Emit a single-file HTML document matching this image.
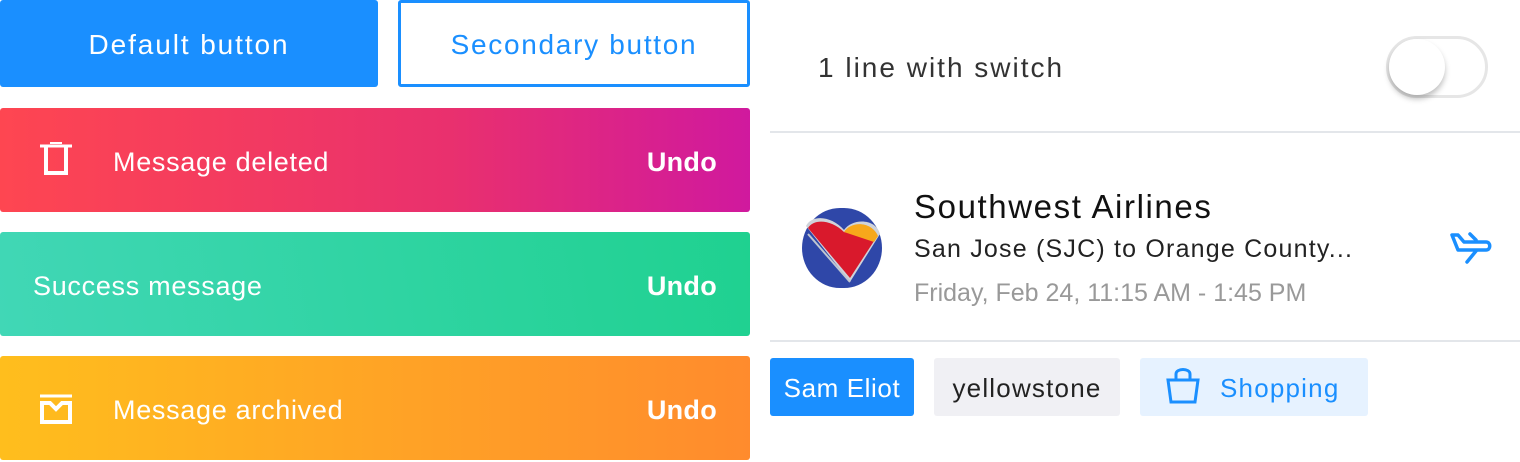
<!DOCTYPE html><html><head><style>
body{margin:0;width:1520px;height:460px;background:#fff;font-family:"Liberation Sans",sans-serif;position:relative;overflow:hidden}
.a{position:absolute}
.btn{position:absolute;top:0;height:87px;border-radius:3px;display:flex;align-items:center;justify-content:center;font-size:28px;letter-spacing:1.9px;padding-top:2px;box-sizing:border-box}
.bar{position:absolute;left:0;width:750px;height:104px;border-radius:3px;color:#fff;font-size:27px;letter-spacing:0.7px}
.bar .t{position:absolute;top:2px;line-height:104px}
.bar .u{position:absolute;right:33px;top:2px;line-height:104px;font-weight:bold;font-size:27px;letter-spacing:0.3px}
.tag{position:absolute;top:358px;height:58px;border-radius:3px;font-size:26px;line-height:60px}
</style></head><body>
<div class="btn" style="left:0;width:378px;background:#1a8fff;color:#fff">Default button</div>
<div class="btn" style="left:398px;width:352px;height:87px;border:3px solid #1a8fff;color:#1a8fff;letter-spacing:1.7px">Secondary button</div>

<div class="bar" style="top:108px;background:linear-gradient(90deg,#fe4651,#e9306e 60%,#d0199e)">
<svg class="a" style="left:40px;top:34px" width="32" height="34" viewBox="0 0 32 34" fill="none" stroke="#fff" stroke-width="4"><path d="M0 4H32" stroke-width="3"/><path d="M10 1H22" stroke-width="2"/><path d="M6 5V31H26V5"/></svg>
<span class="t" style="left:113px">Message deleted</span><span class="u">Undo</span></div>
<div class="bar" style="top:232px;background:linear-gradient(80deg,#41d7b6,#1fd190)">
<span class="t" style="left:33px">Success message</span><span class="u">Undo</span></div>
<div class="bar" style="top:356px;background:linear-gradient(90deg,#ffbe1d,#ff8b2d)">
<svg class="a" style="left:40px;top:38px" width="32" height="30" viewBox="0 0 32 30" fill="none" stroke="#fff" stroke-width="4"><path d="M0 2H32" stroke-width="3"/><path d="M2 9V28H30V9H22L16 15L10 9Z"/></svg>
<span class="t" style="left:113px">Message archived</span><span class="u">Undo</span></div>

<div class="a" style="left:818px;top:52px;font-size:28px;color:#333;letter-spacing:2px">1 line with switch</div>
<div class="a" style="left:1386px;top:36px;width:96px;height:56px;border:3px solid #e6e6e6;border-radius:32px"></div>
<div class="a" style="left:1389px;top:39px;width:56px;height:56px;border-radius:50%;background:#fff;box-shadow:0 4px 6px rgba(0,0,0,0.25)"></div>
<div class="a" style="left:770px;top:131px;width:750px;height:2px;background:#e3e6ea"></div>

<svg class="a" style="left:800px;top:206px" width="84" height="84" viewBox="0 0 84 84">
<rect x="2" y="2" width="80" height="80" rx="38" ry="42" fill="#2f47a8"/>
<path d="M6 20C12 8 32 10 44 24C52 12 76 12 80 28L50 76Z" fill="#cfd3da"/>
<path d="M8 22C14 12 32 14 44 26L76 32L50 72Z" fill="#d9192c"/>
<path d="M44 26C52 14 72 16 78 30L74 36Z" fill="#f7a81b"/>
<path d="M8 28L50 76" stroke="#c0c6d0" stroke-width="2"/>
</svg>
<div class="a" style="left:914px;top:188px;font-size:33px;color:#111;letter-spacing:1.6px">Southwest Airlines</div>
<div class="a" style="left:914px;top:235px;font-size:25px;color:#222;letter-spacing:1.2px">San Jose (SJC) to Orange County...</div>
<div class="a" style="left:914px;top:279px;font-size:25px;color:#999">Friday, Feb 24, 11:15 AM - 1:45 PM</div>
<svg class="a" style="left:1440px;top:220px" width="60" height="50" viewBox="0 0 60 50" fill="none" stroke="#1a8fff" stroke-width="3.5" stroke-linejoin="round" stroke-linecap="round"><path d="M12 15H18L24 22H46C51 22 51 30 46 30H18Z"/><path d="M30 14L36 20"/><path d="M36 31L27 42"/></svg>
<div class="a" style="left:770px;top:340px;width:750px;height:2px;background:#e3e6ea"></div>

<div class="tag" style="left:770px;width:144px;background:#1a8fff;color:#fff;text-align:center;letter-spacing:0.6px">Sam Eliot</div>
<div class="tag" style="left:934px;width:186px;background:#f0f0f4;color:#222;text-align:center;letter-spacing:1.2px">yellowstone</div>
<div class="tag" style="left:1140px;width:228px;background:#e6f2ff;color:#1a8fff">
<svg class="a" style="left:26px;top:10px" width="34" height="36" viewBox="0 0 34 36" fill="none" stroke="#1a8fff" stroke-width="3"><path d="M10 12V6C10 0 24 0 24 6V12"/><path d="M2 12H32L29 34H5Z"/></svg>
<span style="position:absolute;left:80px;letter-spacing:1.2px">Shopping</span></div>
</body></html>
